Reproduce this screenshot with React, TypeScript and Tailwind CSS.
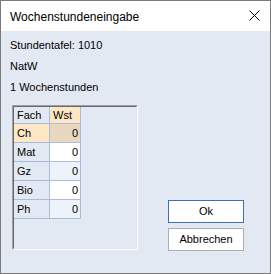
const rows = [
  { fach: "Ch", wst: 0 },
  { fach: "Mat", wst: 0 },
  { fach: "Gz", wst: 0 },
  { fach: "Bio", wst: 0 },
  { fach: "Ph", wst: 0 },
];

function CloseIcon() {
  return (
    <svg width="11" height="11" viewBox="0 0 11 11" className="block">
      <path d="M0.5 0.5 L10.5 10.5 M10.5 0.5 L0.5 10.5" stroke="#000" strokeWidth="1" fill="none" />
    </svg>
  );
}

function SubjectRow({ fach, wst, index }: { fach: string; wst: number; index: number }) {
  const selected = index === 0;
  const fachBg = selected ? "bg-[#fde7c4]" : "bg-[#e3e9f2]";
  const wstBg = selected ? "bg-[#e7d8bf]" : index % 2 === 1 ? "bg-white" : "bg-[#eef2fa]";
  return (
    <div className="flex w-fit h-[19px] border-b border-[#a9bcd9]">
      <div className={`w-[36px] border-r border-[#a9bcd9] pl-[3px] leading-[18px] ${fachBg}`}>{fach}</div>
      <div className={`w-[31px] border-r border-[#a9bcd9] pr-[2px] text-right leading-[18px] ${wstBg}`}>{wst}</div>
    </div>
  );
}

export default function App() {
  return (
    <div
      className="w-[271px] h-[274px] border border-[#7a7a7a] bg-[#e3e9f2] flex flex-col text-black"
      style={{ fontFamily: '"Liberation Sans", Arial, sans-serif' }}
    >
      <div className="h-[30px] bg-white flex items-center justify-between pl-[9px] pr-[10px] shrink-0">
        <span className="text-[12px] mt-[1px]">Wochenstundeneingabe</span>
        <span className="mb-[2px]">
          <CloseIcon />
        </span>
      </div>

      <div className="flex flex-col text-[11px] pt-[4px]">
        <div className="h-[21px] leading-[21px] pl-[9px]">Stundentafel: 1010</div>
        <div className="h-[21px] leading-[21px] pl-[9px]">NatW</div>
        <div className="h-[21px] leading-[21px] pl-[9px]">1 Wochenstunden</div>

        <div className="flex mt-[7px]">
          <div className="ml-[11px] w-[126px] h-[145px] border-t border-l border-[#a0a0a0] border-r border-b border-r-white border-b-white">
            <div className="w-full h-full border-t border-l border-[#696969] border-r border-b border-r-[#e3e3e3] border-b-[#e3e3e3]">
              <div className="flex w-fit h-[17px] border-b border-[#a9bcd9]">
                <div className="w-[36px] border-r border-[#a9bcd9] pl-[3px] leading-[16px] bg-[#e3e9f2]">Fach</div>
                <div className="w-[31px] border-r border-[#a9bcd9] pl-[3px] leading-[16px] bg-[#fde7c4]">Wst</div>
              </div>
              {rows.map((r, i) => (
                <SubjectRow key={r.fach} fach={r.fach} wst={r.wst} index={i} />
              ))}
            </div>
          </div>

          <div className="ml-auto mr-[26px] flex flex-col gap-[5px] pt-[95px]">
            <button className="w-[76px] h-[23px] border border-[#3d6fb3] bg-white text-[11px] leading-[21px]">Ok</button>
            <button className="w-[76px] h-[23px] border border-[#adadad] bg-white text-[11px] leading-[21px]">Abbrechen</button>
          </div>
        </div>
      </div>
    </div>
  );
}
